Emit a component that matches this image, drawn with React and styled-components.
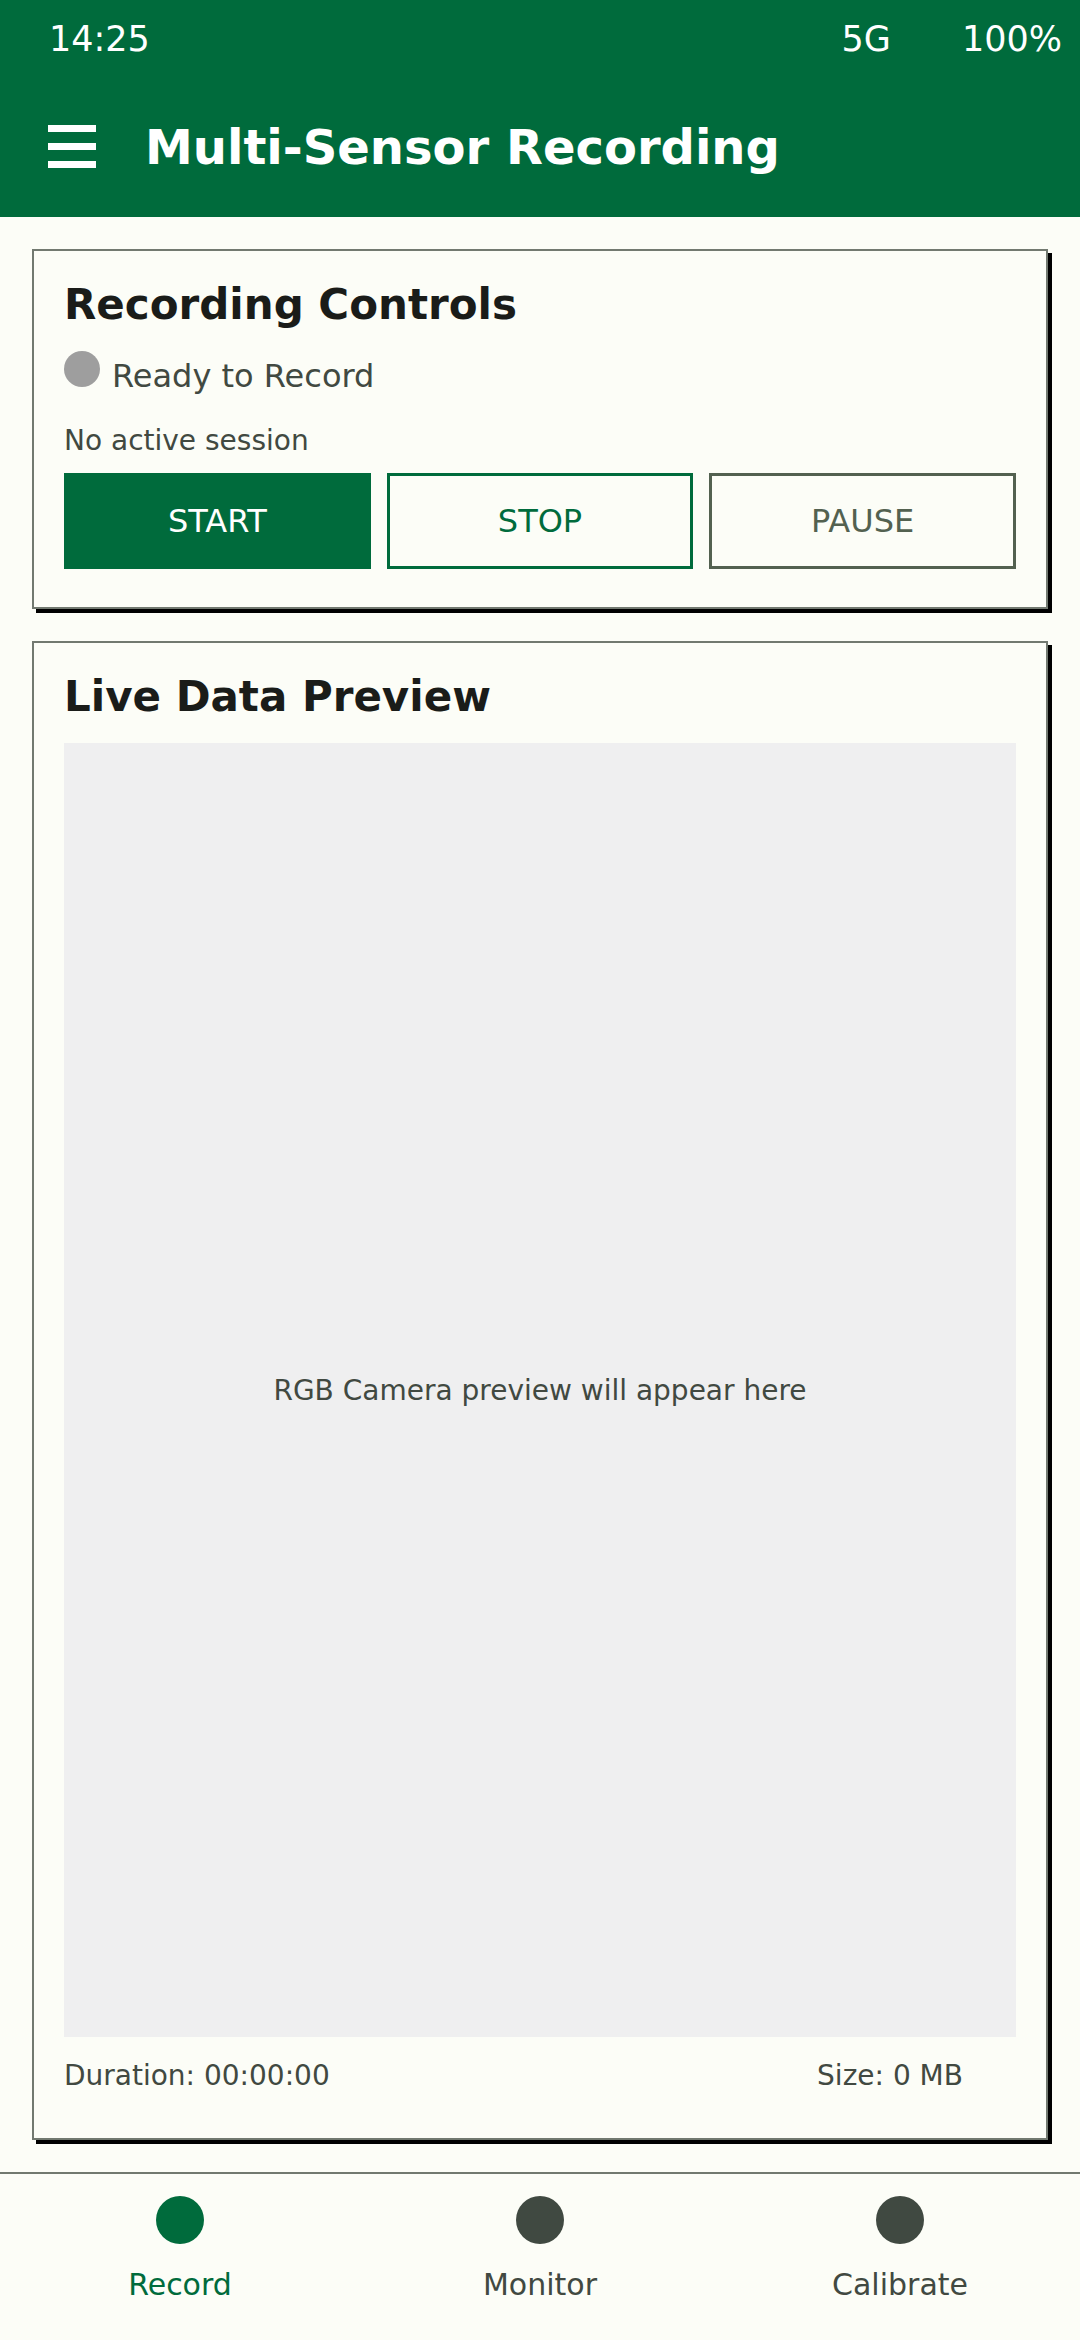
import React from "react";
import styled, { createGlobalStyle } from "styled-components";

const GREEN = "#006b3c";
const OUTLINE = "#727970";
const TEXT = "#414941";

const GlobalStyle = createGlobalStyle`
  html, body {
    margin: 0;
    padding: 0;
    background: #fcfdf7;
    overflow: hidden;
  }
  * {
    box-sizing: border-box;
  }
  body {
    font-family: "DejaVu Sans", "Noto Sans", sans-serif;
  }
`;

const Screen = styled.div`
  display: flex;
  flex-direction: column;
  height: 100vh;
  overflow: hidden;
  background: #fcfdf7;
`;

const StatusBar = styled.div`
  display: flex;
  align-items: center;
  height: 78px;
  padding: 0 18px 0 49px;
  background: ${GREEN};
  color: #ffffff;
  font-size: 35px;
`;

const StatusTime = styled.span`
  flex: 1;
`;

const StatusRight = styled.div`
  display: flex;
  gap: 71px;
`;

const AppBar = styled.header`
  display: flex;
  align-items: center;
  gap: 49px;
  height: 139px;
  padding: 0 48px 2px;
  background: ${GREEN};
  color: #ffffff;
`;

const Title = styled.h1`
  margin: 0;
  font-size: 48px;
  font-weight: bold;
  line-height: normal;
`;

const Main = styled.main`
  flex: 1;
  display: flex;
  flex-direction: column;
  gap: 32px;
  padding: 32px;
  min-height: 0;
`;

const Card = styled.section`
  display: flex;
  flex-direction: column;
  flex: ${(p) => (p.$grow ? 1 : "none")};
  padding: 29px 30px ${(p) => p.$bottom}px;
  border: 2px solid ${OUTLINE};
  background: #fcfdf7;
  box-shadow: 4px 4px 0 #000000;
  min-height: 0;
`;

const CardTitle = styled.h2`
  margin: 0 0 22px;
  font-size: 42px;
  font-weight: bold;
  line-height: normal;
  color: #1a1c19;
`;

const StatusRow = styled.div`
  display: flex;
  align-items: baseline;
  gap: 12px;
  color: ${TEXT};
  font-size: 32px;
`;

const Dot = styled.span`
  display: inline-block;
  width: 36px;
  height: 36px;
  border-radius: 50%;
  background: #9e9e9e;
`;

const SessionText = styled.div`
  margin-top: 29px;
  font-size: 28px;
  color: ${TEXT};
`;

const ButtonRow = styled.div`
  display: grid;
  grid-template-columns: repeat(3, 1fr);
  gap: 16px;
  margin-top: 16px;
`;

const variants = {
  filled: { bg: GREEN, border: GREEN, color: "#ffffff" },
  outline: { bg: "transparent", border: GREEN, color: GREEN },
  muted: { bg: "transparent", border: "#536150", color: "#536150" },
};

const ActionButton = styled.button`
  height: 96px;
  border: 3px solid ${(p) => variants[p.$variant].border};
  border-radius: 0;
  background: ${(p) => variants[p.$variant].bg};
  color: ${(p) => variants[p.$variant].color};
  font-family: "DejaVu Sans", sans-serif;
  font-size: 32px;
  cursor: pointer;
`;

const PreviewArea = styled.div`
  flex: 1;
  display: flex;
  align-items: center;
  justify-content: center;
  background: #efeff0;
  color: ${TEXT};
  font-size: 28px;
`;

const StatsRow = styled.div`
  display: flex;
  justify-content: space-between;
  margin-top: 22px;
  padding-right: 53px;
  font-size: 28px;
  color: ${TEXT};
`;

const BottomNav = styled.nav`
  display: grid;
  grid-template-columns: repeat(3, 1fr);
  height: 168px;
  padding-top: 22px;
  border-top: 2px solid ${OUTLINE};
  background: #fcfdf7;
`;

const NavItem = styled.div`
  display: flex;
  flex-direction: column;
  align-items: center;
  gap: 23px;
  color: ${(p) => (p.$active ? GREEN : TEXT)};
  font-size: 30px;
`;

const NavDot = styled.span`
  width: 48px;
  height: 48px;
  border-radius: 50%;
  background: ${(p) => (p.$active ? GREEN : "#404941")};
`;

const MenuIcon = () => (
  <svg width="48" height="43" viewBox="0 0 48 43" fill="#ffffff">
    <rect x="0" y="0" width="48" height="7" />
    <rect x="0" y="18" width="48" height="7" />
    <rect x="0" y="36" width="48" height="7" />
  </svg>
);

const tabs = [
  { label: "Record", active: true },
  { label: "Monitor" },
  { label: "Calibrate" },
];

export default function App() {
  return (
    <Screen>
      <GlobalStyle />
      <StatusBar>
        <StatusTime>14:25</StatusTime>
        <StatusRight>
          <span>5G</span>
          <span>100%</span>
        </StatusRight>
      </StatusBar>
      <AppBar>
        <MenuIcon />
        <Title>Multi-Sensor Recording</Title>
      </AppBar>

      <Main>
        <Card $bottom={38}>
          <CardTitle>Recording Controls</CardTitle>
          <StatusRow>
            <Dot />
            <span>Ready to Record</span>
          </StatusRow>
          <SessionText>No active session</SessionText>
          <ButtonRow>
            <ActionButton $variant="filled">START</ActionButton>
            <ActionButton $variant="outline">STOP</ActionButton>
            <ActionButton $variant="muted">PAUSE</ActionButton>
          </ButtonRow>
        </Card>

        <Card $grow $bottom={46}>
          <CardTitle>Live Data Preview</CardTitle>
          <PreviewArea>RGB Camera preview will appear here</PreviewArea>
          <StatsRow>
            <span>Duration: 00:00:00</span>
            <span>Size: 0 MB</span>
          </StatsRow>
        </Card>
      </Main>

      <BottomNav>
        {tabs.map((tab) => (
          <NavItem key={tab.label} $active={tab.active}>
            <NavDot $active={tab.active} />
            <span>{tab.label}</span>
          </NavItem>
        ))}
      </BottomNav>
    </Screen>
  );
}
